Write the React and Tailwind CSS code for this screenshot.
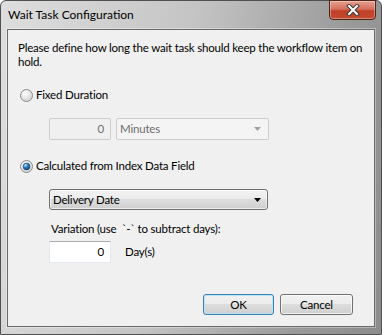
import React from 'react';

const font = { fontFamily: 'Lato, "Noto Sans", sans-serif' };

function Radio({ checked }) {
  return (
    <svg width="13" height="13" viewBox="0 0 13 13" className="shrink-0">
      <defs>
        <radialGradient id="rbg" cx="0.4" cy="0.35" r="0.7">
          <stop offset="0" stopColor="#ffffff" />
          <stop offset="1" stopColor="#cfd0d0" />
        </radialGradient>
        <radialGradient id="rdot" cx="0.35" cy="0.3" r="0.8">
          <stop offset="0" stopColor="#b6ecff" />
          <stop offset="0.45" stopColor="#2a7cc4" />
          <stop offset="1" stopColor="#0b2f5c" />
        </radialGradient>
      </defs>
      <circle cx="6.5" cy="6.5" r="6" fill="url(#rbg)" stroke="#8b8c8c" />
      {checked && <circle cx="6.5" cy="6.5" r="3.4" fill="url(#rdot)" stroke="#1b3f66" strokeWidth="0.6" />}
    </svg>
  );
}

function Arrow({ color }) {
  return (
    <svg width="7" height="4" viewBox="0 0 7 4">
      <path d="M0 0h7L3.5 4z" fill={color} />
    </svg>
  );
}

export default function App() {
  return (
    <div style={font} className="w-[382px] h-[335px] text-[11.5px] tracking-[-0.2px] text-black">
      <div className="w-full h-full flex flex-col rounded-t-[6px] border border-[#505050] bg-[linear-gradient(100deg,#dedede_0%,#c4c4c4_45%,#9a9a9a_80%,#8c8c8c_100%)]">
        {/* Title bar */}
        <div className="h-[28px] flex items-start justify-between">
          <span className="pl-[7px] pt-[6px] leading-[16px] text-[12px] tracking-normal">Wait Task Configuration</span>
          <button className="w-[47px] h-[20px] mr-[5px] -mt-px flex items-center justify-center rounded-b-[4px] border border-[#4f2219] bg-[linear-gradient(#e7a090_0%,#d3705c_45%,#c13f26_55%,#c44a30_100%)] shadow-[inset_0_0_0_1px_rgba(255,255,255,0.35)]">
            <svg width="14" height="12" viewBox="0 0 14 12">
              <path d="M3 2l8 8M11 2l-8 8" stroke="#3a3a3a" strokeWidth="4" strokeLinecap="square" />
              <path d="M3 2l8 8M11 2l-8 8" stroke="#ffffff" strokeWidth="2" strokeLinecap="square" />
            </svg>
          </button>
        </div>

        {/* Client area */}
        <div className="flex-1 mx-[6px] mb-[7px] border border-[#6a6a6a] shadow-[0_0_0_1px_rgba(255,255,255,0.35)] bg-[#f0f0f0] px-[10px] pt-[11px] flex flex-col">
          <p className="leading-[14px]">
            <span className="whitespace-nowrap">Please define how long the wait task should keep the workflow item on</span>
            <br />hold.
          </p>

          <label className="mt-[19px] ml-[2px] h-[14px] flex items-center gap-[3px]">
            <Radio />
            <span>Fixed Duration</span>
          </label>

          <div className="mt-[16px] ml-[31px] flex gap-[5px]">
            <div className="w-[62px] h-[22px] border border-[#cdcdcd] rounded-[2px] bg-[#f0f0f0] flex items-center justify-end pr-[6px] text-[#6d6d6d]">0</div>
            <div className="w-[153px] h-[22px] border border-[#cdcdcd] rounded-[2px] bg-[#f4f4f4] flex items-center justify-between pl-[3px] pr-[7px] text-[#6d6d6d]">
              <span>Minutes</span>
              <Arrow color="#a0a0a0" />
            </div>
          </div>

          <label className="mt-[19px] ml-[2px] h-[14px] flex items-center gap-[3px]">
            <Radio checked />
            <span>Calculated from Index Data Field</span>
          </label>

          <div className="mt-[16px] ml-[31px] w-[219px] h-[21px] border border-[#707070] rounded-[3px] bg-[linear-gradient(#f2f2f2_0%,#ebebeb_50%,#dddddd_50%,#cfcfcf_100%)] shadow-[inset_0_0_0_1px_rgba(255,255,255,0.6)] flex items-center justify-between pl-[3px] pr-[6px]">
            <span>Delivery Date</span>
            <Arrow color="#000000" />
          </div>

          <p className="mt-[12px] ml-[33px] leading-[14px]">Variation (use&nbsp; `-` to subtract days):</p>

          <div className="mt-[5px] ml-[31px] flex items-center gap-[14px]">
            <div className="w-[62px] h-[22px] border border-[#e3e9ef] border-t-[#abadb3] bg-white flex items-center justify-end pr-[6px]">0</div>
            <span>Day(s)</span>
          </div>

          <div className="mt-[31px] flex justify-end gap-[6px] pr-[11px]">
            <button className="w-[71px] h-[21px] rounded-[3px] border border-[#3c7fb1] bg-[linear-gradient(#f2f2f2_0%,#ebebeb_50%,#dddddd_50%,#cfcfcf_100%)] shadow-[inset_0_0_0_1px_#b8e3f8]">OK</button>
            <button className="w-[73px] h-[21px] rounded-[3px] border border-[#707070] bg-[linear-gradient(#f2f2f2_0%,#ebebeb_50%,#dddddd_50%,#cfcfcf_100%)] shadow-[inset_0_0_0_1px_rgba(255,255,255,0.7)]">Cancel</button>
          </div>
        </div>
      </div>
    </div>
  );
}
